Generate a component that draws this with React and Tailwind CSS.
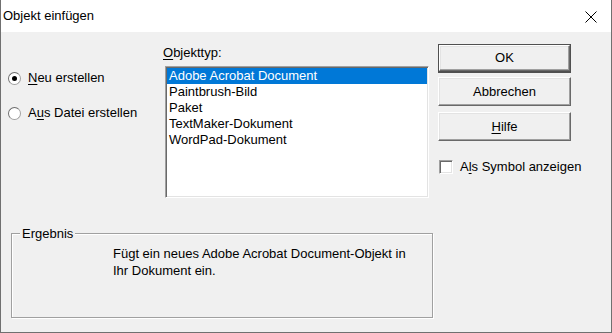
import React from 'react';

const items = [
  'Adobe Acrobat Document',
  'Paintbrush-Bild',
  'Paket',
  'TextMaker-Dokument',
  'WordPad-Dokument',
];

const btn3d =
  'flex items-center justify-center w-[133px] h-[29px] bg-[#f0f0f0] border border-t-white border-l-white border-r-[#696969] border-b-[#696969] shadow-[inset_-1px_-1px_0_#a0a0a0,inset_1px_1px_0_#e3e3e3]';

const Radio = ({ checked, children }) => (
  <div className="flex items-center h-[16px]">
    <span className="flex items-center justify-center w-[13px] h-[13px] rounded-full bg-white border border-[#a0a0a0] border-t-[#6d6d6d] border-l-[#6d6d6d]">
      {checked && <span className="w-[5px] h-[5px] rounded-full bg-black" />}
    </span>
    <span className="ml-[7px]">{children}</span>
  </div>
);

export default function App() {
  return (
    <div
      className="w-[612px] h-[333px] bg-[#f0f0f0] border-x border-b border-[#707070] text-[13px] leading-[16px] text-black flex flex-col"
      style={{ fontFamily: '"Liberation Sans", Arial, sans-serif' }}
    >
      {/* Title bar */}
      <div className="h-[32px] bg-white flex items-center justify-between pl-[2px] pr-[14px] shrink-0">
        <span className="text-[13px]">Objekt einfügen</span>
        <svg width="12" height="12" viewBox="0 0 12 12" className="mt-[1px]">
          <path d="M0.5 0.5 L11.5 11.5 M11.5 0.5 L0.5 11.5" stroke="#000" strokeWidth="1" />
        </svg>
      </div>

      {/* Body */}
      <div className="flex flex-col pl-[7px] pt-[12px]">
        <div className="flex">
          {/* Radios */}
          <div className="w-[155px] flex flex-col pt-[26px] gap-[19px]">
            <Radio checked>
              <u className="underline-offset-2">N</u>eu erstellen
            </Radio>
            <Radio>
              A<u className="underline-offset-2">u</u>s Datei erstellen
            </Radio>
          </div>

          {/* Object type list */}
          <div className="w-[266px] flex flex-col">
            <div className="h-[18px] flex items-center">
              <span>
                <u className="underline-offset-2">O</u>bjekttyp:
              </span>
            </div>
            <div className="ml-[2px] mt-[4px] w-[264px] h-[132px] bg-white border border-t-[#a0a0a0] border-l-[#a0a0a0] border-r-white border-b-white p-[1px] shadow-[inset_1px_1px_0_#696969,inset_-1px_-1px_0_#e3e3e3]">
              {items.map((it, i) => (
                <div
                  key={it}
                  className={`h-[16px] pl-[2px] flex items-center whitespace-nowrap ${
                    i === 0 ? 'bg-[#0078d7] text-white' : ''
                  }`}
                >
                  {it}
                </div>
              ))}
            </div>
          </div>

          {/* Buttons */}
          <div className="ml-[9px] flex flex-col">
            <div className="border border-[#505050] border-b-2 w-[133px] h-[29px]">
              <div className={btn3d.replace('w-[133px] h-[29px]', 'w-full h-full')}>OK</div>
            </div>
            <div className={`${btn3d} mt-[4px]`}>Abbrechen</div>
            <div className={`${btn3d} mt-[6px]`}>
              <span>
                <u className="underline-offset-2">H</u>ilfe
              </span>
            </div>
            <div className="flex items-center mt-[18px] ml-[1px]">
              <span className="w-[14px] h-[14px] bg-white border border-t-[#a0a0a0] border-l-[#a0a0a0] border-r-white border-b-white shadow-[inset_1px_1px_0_#696969,inset_-1px_-1px_0_#e3e3e3]" />
              <span className="ml-[7px]">
                A<u className="underline-offset-2">l</u>s Symbol anzeigen
              </span>
            </div>
          </div>
        </div>

        {/* Ergebnis group */}
        <div className="relative ml-[3px] mt-[35px] w-[422px] h-[85px] border border-[#a0a0a0] shadow-[inset_1px_1px_0_#fff,1px_1px_0_#fff] pl-[101px] pt-[11px] leading-[17px]">
          <span className="absolute left-[8px] top-[-9px] bg-[#f0f0f0] px-[2px]">Ergebnis</span>
          <div className="whitespace-nowrap">Fügt ein neues Adobe Acrobat Document-Objekt in</div>
          <div className="whitespace-nowrap">Ihr Dokument ein.</div>
        </div>
      </div>
    </div>
  );
}
